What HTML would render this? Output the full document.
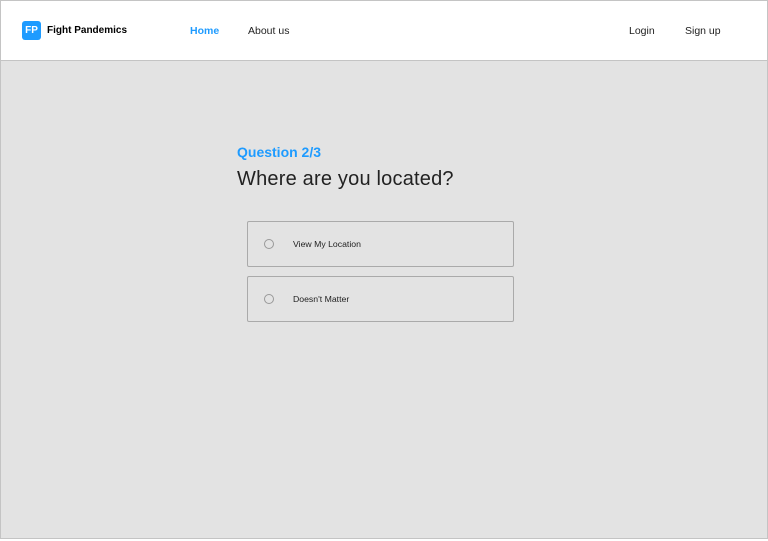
<!DOCTYPE html>
<html><head><style>
body{margin:0;width:768px;height:541px;background:#fff;font-family:"Liberation Sans",sans-serif;overflow:hidden;position:relative}
.frame{position:absolute;left:0;top:0;width:766px;height:537px;border:1px solid #c4c4c4;background:#e3e3e3}
.hdr{position:absolute;left:1px;top:1px;width:766px;height:59px;background:#fff;border-bottom:1px solid #c4c4c4}
.logo{position:absolute;left:21px;top:20px;width:19px;height:19px;background:#1e9bff;border-radius:3px;color:#fff;font-size:10px;font-weight:bold;text-align:center;line-height:19px}
.t{position:absolute;font-size:10.5px;color:#222}
.opt{position:absolute;left:247px;width:265px;height:44px;border:1px solid #aaa;border-radius:2px}
.rad{position:absolute;left:16px;top:17px;width:8px;height:8px;border:1px solid #999;border-radius:50%}
.opt span{position:absolute;left:45px;top:17px;font-size:8.7px;color:#222}
</style></head><body>
<div class="frame"></div>
<div class="hdr">
<div class="logo">FP</div>
<div class="t" style="left:46px;top:24px;font-weight:bold;font-size:10px;color:#000">Fight Pandemics</div>
<div class="t" style="left:189px;top:24px;color:#1e9bff;font-weight:bold">Home</div>
<div class="t" style="left:247px;top:24px">About us</div>
<div class="t" style="left:628px;top:24px">Login</div>
<div class="t" style="left:684px;top:24px">Sign up</div>
</div>
<div class="t" style="left:237px;top:144px;font-size:14px;font-weight:bold;color:#1e9bff">Question 2/3</div>
<div class="t" style="left:237px;top:168px;font-size:20px;color:#222;letter-spacing:0.2px">Where are you located?</div>
<div class="opt" style="top:221px"><div class="rad"></div><span>View My Location</span></div>
<div class="opt" style="top:276px"><div class="rad"></div><span>Doesn't Matter</span></div>
</body></html>
